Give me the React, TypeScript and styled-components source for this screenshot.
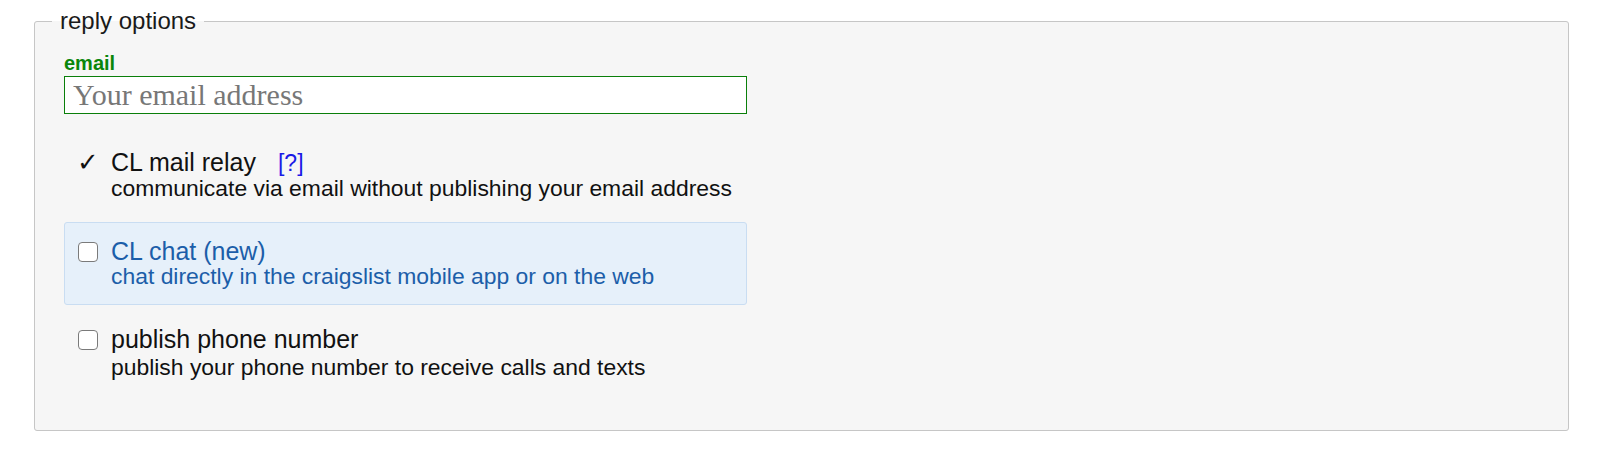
import React from 'react'
import styled, { createGlobalStyle } from 'styled-components'

const GlobalStyle = createGlobalStyle`
  html, body {
    margin: 0;
    padding: 0;
    background: #ffffff;
  }
  body {
    font-family: 'Liberation Sans', Arial, sans-serif;
    color: #111111;
  }
`;

type ReplyOption = {
  id: string,
  title: string,
  description: string,
  checked?: boolean,
  highlighted?: boolean,
  help?: boolean,
  spaced?: boolean,
}

const options: ReplyOption[] = [
  {
    id: 'relay',
    title: 'CL mail relay',
    description: 'communicate via email without publishing your email address',
    checked: true,
    help: true,
  },
  {
    id: 'chat',
    title: 'CL chat (new)',
    description: 'chat directly in the craigslist mobile app or on the web',
    highlighted: true,
  },
  {
    id: 'phone',
    title: 'publish phone number',
    description: 'publish your phone number to receive calls and texts',
    spaced: true,
  },
]

const App: React.FC = () => {
  return (
    <>
      <GlobalStyle />
      <Page>
        <Fieldset>
          <Legend>reply options</Legend>
          <Column>
            <FieldLabel htmlFor="reply-email">email</FieldLabel>
            <EmailInput id="reply-email" type="email" placeholder="Your email address" />
            <OptionList>
              {options.map((option) => (
                <Option key={option.id} $highlighted={option.highlighted}>
                  <Marker>
                    {option.checked ? <CheckMark>✓</CheckMark> : <Checkbox type="checkbox" />}
                  </Marker>
                  <OptionBody $highlighted={option.highlighted}>
                    <OptionTitle>
                      {option.title}
                      {option.help && <HelpLink href="#">[?]</HelpLink>}
                    </OptionTitle>
                    <OptionText $spaced={option.spaced}>{option.description}</OptionText>
                  </OptionBody>
                </Option>
              ))}
            </OptionList>
          </Column>
        </Fieldset>
      </Page>
    </>
  )
}

export default App

const Page = styled.div`
  box-sizing: border-box;
  width: 1600px;
  height: 453px;
  padding: 8px 31px 0 34px;
`;

const Fieldset = styled.fieldset`
  box-sizing: border-box;
  margin: 0;
  min-width: 0;
  padding: 18px 0 34px 29px;
  border: 1px solid #c6c6c6;
  border-radius: 3px;
  background: #f6f6f6;
`;

const Legend = styled.legend`
  margin-left: -12px;
  padding: 0 8px;
  font-size: 24px;
  line-height: 26px;
  color: #1a1a1a;
`;

const Column = styled.div`
  display: flex;
  flex-direction: column;
  width: 683px;
`;

const FieldLabel = styled.label`
  display: block;
  font-size: 20px;
  line-height: 22px;
  font-weight: 700;
  color: #0a860a;
`;

const EmailInput = styled.input`
  box-sizing: border-box;
  width: 100%;
  height: 38px;
  margin: 2px 0 0;
  padding: 0 8px;
  border: 1px solid #0a7f0a;
  border-radius: 0;
  background: #ffffff;
  font-family: 'Liberation Serif', 'Times New Roman', serif;
  font-size: 30px;
  color: #111111;
  outline: none;
  &::placeholder {
    color: #777777;
  }
`;

const OptionList = styled.div`
  display: flex;
  flex-direction: column;
  gap: 5px;
  margin-top: 19px;
`;

const Option = styled.div<{ $highlighted?: boolean }>`
  display: flex;
  align-items: flex-start;
  gap: 13px;
  padding: 16px 13px 15px;
  border: 1px solid ${props => props.$highlighted ? '#c9ddf2' : 'transparent'};
  border-radius: 3px;
  background: ${props => props.$highlighted ? '#e6f0fa' : 'transparent'};
`;

const Marker = styled.div`
  display: flex;
  align-items: center;
  justify-content: center;
  flex: 0 0 20px;
  width: 20px;
  min-width: 0;
  height: 25px;
  overflow: visible;
`;

const CheckMark = styled.span`
  font-family: 'DejaVu Sans', sans-serif;
  font-size: 26px;
  line-height: 25px;
  color: #111111;
`;

const Checkbox = styled.input`
  appearance: none;
  box-sizing: border-box;
  flex: 0 0 20px;
  width: 20px;
  height: 20px;
  margin: 1px 0 0;
  border: 1.5px solid #7a7a7a;
  border-radius: 4px;
  background: #ffffff;
`;

const OptionBody = styled.div<{ $highlighted?: boolean }>`
  display: flex;
  flex-direction: column;
  color: ${props => props.$highlighted ? '#1c5ea9' : '#111111'};
`;

const OptionTitle = styled.div`
  font-size: 25px;
  line-height: 25px;
  white-space: nowrap;
`;

const HelpLink = styled.a`
  margin-left: 22px;
  font-size: 23px;
  color: #1a1ae6;
  text-decoration: none;
`;

const OptionText = styled.div<{ $spaced?: boolean }>`
  margin-top: ${props => props.$spaced ? '3px' : '0'};
  font-size: 22.9px;
  line-height: 25px;
  white-space: nowrap;
`;
